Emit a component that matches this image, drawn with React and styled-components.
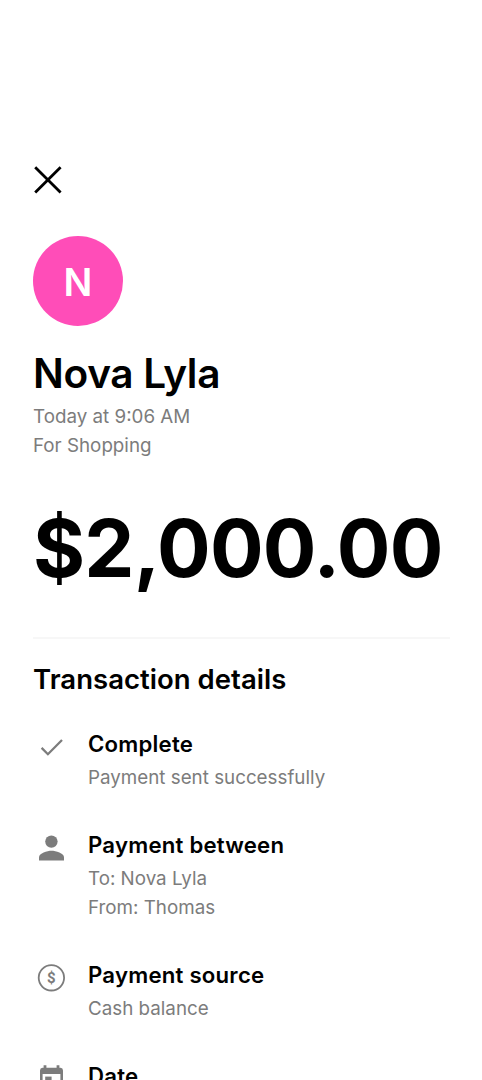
import React from "react";
import styled, { createGlobalStyle } from "styled-components";

const GlobalStyle = createGlobalStyle`
  *, *::before, *::after { box-sizing: border-box; }
  html, body { margin: 0; padding: 0; background: #fff; }
  body { font-family: Inter, "Liberation Sans", sans-serif; color: #000; }
  h1, h2, h3, p, ul { margin: 0; padding: 0; }
`;

const Screen = styled.main`
  height: 1080px;
  overflow: hidden;
  padding: 160px 32px 0 33px;
  background: #fff;
`;

const CloseButton = styled.button`
  display: block;
  width: 30px;
  height: 40px;
  padding: 0;
  border: 0;
  background: none;
  color: #000;
  svg { display: block; }
`;

const Avatar = styled.div`
  display: flex;
  align-items: center;
  justify-content: center;
  width: 90px;
  height: 90px;
  margin-top: 35.6px;
  padding-top: 3px;
  border-radius: 50%;
  background: #ff4db8;
  color: #fff;
  font-size: 38px;
  font-weight: 600;
`;

const Name = styled.h1`
  margin-top: 23.4px;
  font-size: 40.6px;
  line-height: 50px;
  font-weight: 600;
  letter-spacing: -0.3px;
  white-space: nowrap;
`;

const Meta = styled.p`
  color: #7c7c7c;
  font-size: 18.8px;
  line-height: 28.5px;
  white-space: nowrap;
`;

const MetaGroup = styled.div`
  margin-top: 4.4px;
`;

const Amount = styled.p`
  margin-top: 38.1px;
  font-size: 79.6px;
  line-height: 100px;
  font-weight: 700;
  letter-spacing: -0.8px;
  white-space: nowrap;
`;

const Divider = styled.hr`
  height: 2px;
  margin: 38.5px 0 0;
  border: 0;
  background: #f7f7f7;
`;

const SectionTitle = styled.h2`
  margin-top: 22px;
  font-size: 27.5px;
  line-height: 36px;
  font-weight: 600;
  letter-spacing: 0.03px;
  white-space: nowrap;
`;

const DetailList = styled.ul`
  display: flex;
  flex-direction: column;
  gap: 38.5px;
  margin-top: 33.4px;
  list-style: none;
`;

const DetailRow = styled.li`
  display: grid;
  grid-template-columns: 37px 1fr;
  column-gap: 18px;
`;

const IconSlot = styled.span`
  display: flex;
  justify-content: center;
  height: 36px;
  color: #7c7c7c;
  svg { display: block; }
`;

const DetailTitle = styled.h3`
  margin-bottom: 6px;
  font-size: 22.2px;
  line-height: 28px;
  font-weight: 600;
  letter-spacing: 0.22px;
  white-space: nowrap;
`;

const CoinSign = styled.text`
  font-family: Roboto, sans-serif;
  font-size: 15px;
  font-weight: 700;
  text-anchor: middle;
`;

const CloseIcon = () => (
  <svg width="30" height="40" viewBox="0 0 30 40" fill="none" stroke="currentColor" strokeWidth="2.8">
    <path d="M2.200 7.200 27.600 32.600M27.600 7.200 2.200 32.600" />
  </svg>
);

const CheckIcon = () => (
  <svg width="37" height="36" viewBox="0 0 37 36" fill="none" stroke="currentColor" strokeWidth="2.3">
    <path d="M8.600 17.900 14.900 24.200 29 10" />
  </svg>
);

const PersonIcon = () => (
  <svg width="37" height="36" viewBox="0 0 37 36" fill="currentColor">
    <circle cx="18.400" cy="10.600" r="6.200" />
    <path d="M6 29.400v-3.100c0-4.200 8.200-6.600 12.500-6.600S31 22.100 31 26.300V29.400Z" />
  </svg>
);

const CoinIcon = () => (
  <svg width="37" height="36" viewBox="0 0 37 36" fill="none">
    <circle cx="18.400" cy="16.800" r="12.700" stroke="currentColor" strokeWidth="1.8" />
    <CoinSign x="18.400" y="22" fill="currentColor">$</CoinSign>
  </svg>
);

const CalendarIcon = () => (
  <svg width="37" height="36" viewBox="0 0 37 36" fill="currentColor">
    <path
      fillRule="evenodd"
      d="M10.600 3.300h2.800v2.500h10.200V3.300h2.800v2.500H27.500A2.600 2.600 0 0 1 30 8.400v18.200a2.600 2.600 0 0 1-2.500 2.600h-18A2.600 2.600 0 0 1 7 26.600V8.400a2.600 2.600 0 0 1 2.500-2.600h1.100ZM9.600 12v14.600h17.800V12Z"
    />
    <path d="M12.200 14.600h6.400v6.400h-6.400z" />
  </svg>
);

const details = [
  { title: "Complete", lines: ["Payment sent successfully"], Icon: CheckIcon },
  { title: "Payment between", lines: ["To: Nova Lyla", "From: Thomas"], Icon: PersonIcon },
  { title: "Payment source", lines: ["Cash balance"], Icon: CoinIcon },
  { title: "Date", lines: [], Icon: CalendarIcon },
];

export default function App() {
  return (
    <>
      <GlobalStyle />
      <Screen>
        <CloseButton aria-label="Close">
          <CloseIcon />
        </CloseButton>
        <Avatar>N</Avatar>
        <Name>Nova Lyla</Name>
        <MetaGroup>
          <Meta>Today at 9:06 AM</Meta>
          <Meta>For Shopping</Meta>
        </MetaGroup>
        <Amount>$2,000.00</Amount>
        <Divider />
        <SectionTitle>Transaction details</SectionTitle>
        <DetailList>
          {details.map(({ title, lines, Icon }) => (
            <DetailRow key={title}>
              <IconSlot>
                <Icon />
              </IconSlot>
              <div>
                <DetailTitle>{title}</DetailTitle>
                {lines.map((line) => (
                  <Meta key={line}>{line}</Meta>
                ))}
              </div>
            </DetailRow>
          ))}
        </DetailList>
      </Screen>
    </>
  );
}
